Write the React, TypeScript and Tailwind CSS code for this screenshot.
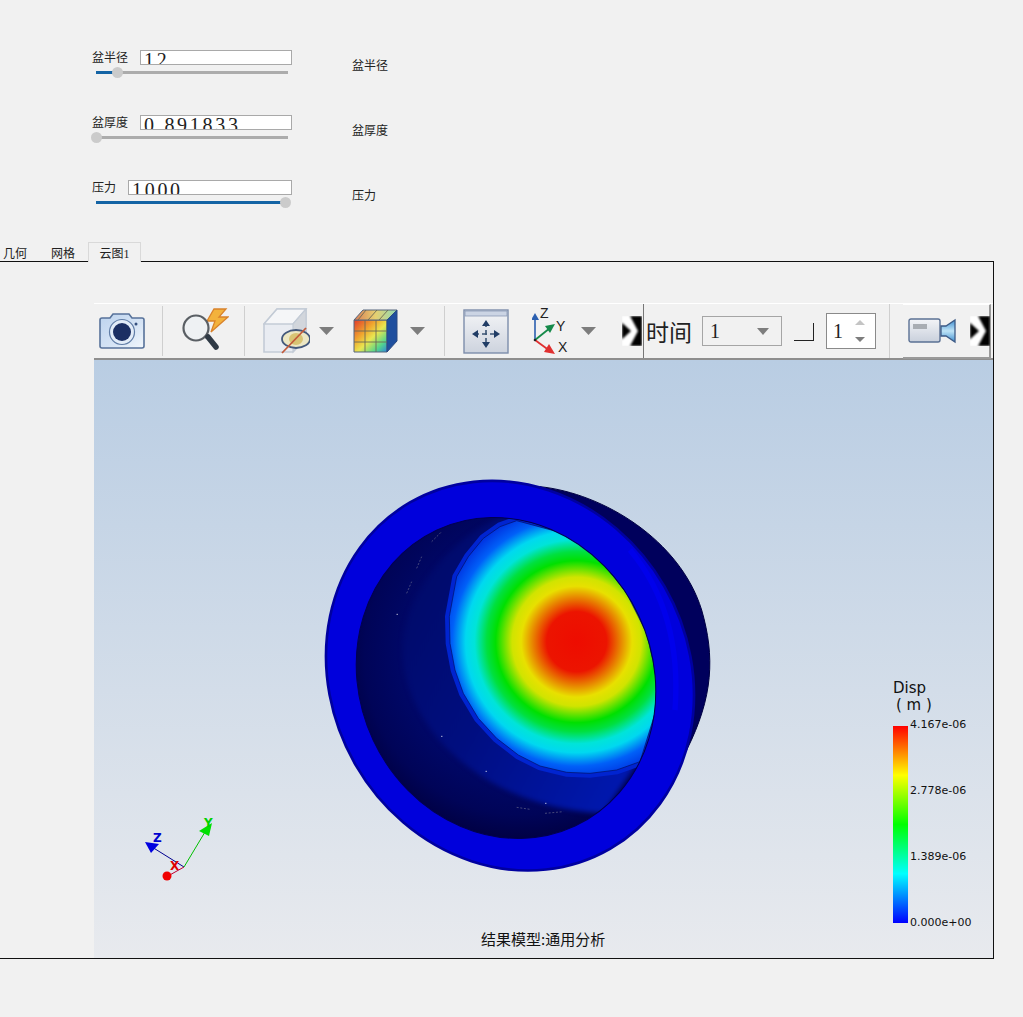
const cjk = "font-['Noto_Sans_CJK_SC','Liberation_Sans',sans-serif]";

const FormRow = ({
  label,
  value,
  inputWidth,
  percent,
}: {
  label: string;
  value: string;
  inputWidth: string;
  percent: number;
}) => (
  <div className="flex h-[65px] items-start">
    <div className="w-[260px] flex-none">
      <div className="flex w-[200px] items-start justify-between">
        <span className="mt-[-2px] text-[12px] leading-[17px] text-[#222]">{label}</span>
        <div
          className={`${inputWidth} h-[15px] overflow-hidden border border-[#a9a9a9] bg-white pl-[3px] font-['Liberation_Serif',serif] text-[20px] leading-[19px] tracking-[2.7px] text-[#222]`}
        >
          {value}
        </div>
      </div>
      <div className="relative ml-[4px] mt-[6px] h-[3px] w-[192px] bg-[#acacac]">
        <div className="h-full bg-[#1464a5]" style={{ width: `${percent}%` }} />
        <div
          className="absolute top-[-4px] ml-[-5px] h-[11px] w-[11px] rounded-full bg-[#cbcbcb]"
          style={{ left: `${percent}%` }}
        />
      </div>
    </div>
    <span className="mt-[6px] text-[12px] leading-[17px] text-[#222]">{label}</span>
  </div>
);

const Separator = ({ className }: { className: string }) => (
  <div className={`h-[50px] w-[1px] flex-none bg-[#cfcfcf] ${className}`} />
);

const DropArrow = ({ className }: { className: string }) => (
  <svg width="15" height="8" viewBox="0 0 15 8" className={`flex-none ${className}`}>
    <path d="M0 0H15L7.5 8Z" fill="#7d7d7d" />
  </svg>
);

const MoreChevron = ({ className }: { className: string }) => (
  <div className={`h-[30px] w-[20px] flex-none overflow-hidden ${className}`}>
    <svg width="20" height="30" viewBox="0 0 20 30" className="blur-[1px]">
      <rect width="20" height="30" fill="#fff" />
      <path d="M-2 5 9 15 -2 25Z" fill="#000" />
      <path d="M7 -2H22V32H7L16 15Z" fill="#000" />
    </svg>
  </div>
);

const CameraIcon = () => (
  <svg width="46" height="38" viewBox="0 0 46 38" className="ml-[5px] flex-none">
    <defs>
      <linearGradient id="camBody" x1="0" y1="0" x2="1" y2="1">
        <stop offset="0" stopColor="#bcd3ee" />
        <stop offset="0.6" stopColor="#d6e4f5" />
        <stop offset="1" stopColor="#f2f7fc" />
      </linearGradient>
    </defs>
    <path
      d="M3 6H11L14 2H30L33 6H43Q45 6 45 8V34Q45 36 43 36H3Q1 36 1 34V8Q1 6 3 6Z"
      fill="url(#camBody)"
      stroke="#57729a"
      strokeWidth="1.6"
    />
    <circle cx="23" cy="20" r="12.5" fill="#e2ecf8" stroke="#5f7ca6" strokeWidth="1.2" />
    <circle cx="23" cy="20" r="9" fill="#1b2f63" />
    <circle cx="37" cy="12" r="1.5" fill="#35507f" />
  </svg>
);

const SearchBoltIcon = () => (
  <svg width="48" height="46" viewBox="0 0 48 46" className="ml-[18px] flex-none">
    <path d="M33 1H45L38 9H47L30 24L34 13H26Z" fill="#f3b23c" stroke="#d9822b" strokeWidth="1.3" />
    <circle cx="15" cy="20" r="12.5" fill="#eef1f3" stroke="#5a5f64" strokeWidth="2.2" />
    <path d="M24 30 27 27" stroke="#5a6068" strokeWidth="3" />
    <path d="M27 29 L35 39" stroke="#2f3a45" strokeWidth="5.5" strokeLinecap="round" />
  </svg>
);

const HiddenCubeIcon = () => (
  <svg width="47" height="46" viewBox="0 0 47 46" className="ml-[18px] flex-none">
    <path d="M1 16 14 1H43V30L30 44H1Z" fill="#e9ecf2" stroke="#c3cbd6" strokeWidth="1.6" />
    <path d="M1 16H30L43 1H14Z" fill="#f5f6f8" stroke="#c3cbd6" strokeWidth="1.4" />
    <path d="M30 16 43 1V30L30 44Z" fill="#d2d6dc" stroke="#c3cbd6" strokeWidth="1.2" />
    <ellipse cx="33" cy="31" rx="14" ry="9" fill="#ece7c4" stroke="#44597c" strokeWidth="1.8" />
    <ellipse cx="33" cy="31" rx="7" ry="6" fill="#d8c474" />
    <path d="M19 45 43 20" stroke="#c25a3a" strokeWidth="1.8" />
  </svg>
);

const ColorCubeIcon = () => (
  <svg width="45" height="45" viewBox="0 0 45 45" className="ml-[19px] flex-none">
    <defs>
      <linearGradient id="cubeFront" x1="0" y1="0" x2="1" y2="1">
        <stop offset="0" stopColor="#e0392c" />
        <stop offset="0.35" stopColor="#f0a92f" />
        <stop offset="0.55" stopColor="#e9e650" />
        <stop offset="0.8" stopColor="#55d68a" />
        <stop offset="1" stopColor="#2e86dd" />
      </linearGradient>
      <linearGradient id="cubeTop" x1="0" y1="0" x2="1" y2="0">
        <stop offset="0" stopColor="#d97a54" />
        <stop offset="0.5" stopColor="#e6d070" />
        <stop offset="1" stopColor="#8ed9b5" />
      </linearGradient>
    </defs>
    <path d="M1 11H34V43H1Z" fill="url(#cubeFront)" stroke="#54657c" strokeWidth="1" />
    <path d="M1 11 10 1H44L34 11Z" fill="url(#cubeTop)" stroke="#54657c" strokeWidth="1" />
    <path d="M34 11 44 1V32L34 43Z" fill="#1f4f9e" stroke="#2c4b80" strokeWidth="1" />
    <path d="M12 11V43M23 11V43M1 22H34M1 33H34M13 1 5 11M24 1 15 11M35 1 26 11" stroke="#6b6a55" strokeWidth="0.9" fill="none" />
  </svg>
);

const FitIcon = () => (
  <svg width="46" height="45" viewBox="0 0 46 45" className="ml-[18px] flex-none">
    <defs>
      <linearGradient id="fitBody" x1="0" y1="0" x2="0" y2="1">
        <stop offset="0" stopColor="#f4f5f7" />
        <stop offset="1" stopColor="#cdd3de" />
      </linearGradient>
    </defs>
    <rect x="1" y="1" width="44" height="43" fill="url(#fitBody)" stroke="#7d8dab" strokeWidth="1.4" />
    <rect x="2" y="2" width="42" height="5" fill="#cbd4e4" stroke="#8a99b5" strokeWidth="0.8" />
    <path d="M23 13V37M11 25H35" stroke="#3b5474" strokeWidth="1.6" strokeDasharray="5 3" />
    <path d="M23 11 19 17H27ZM23 39 19 33H27ZM9 25 15 21V29ZM37 25 31 21V29Z" fill="#213d66" />
  </svg>
);

const AxesIcon = () => (
  <svg width="38" height="47" viewBox="0 0 38 47" className="ml-[23px] flex-none">
    <path d="M3 32V9" stroke="#2b5fb0" strokeWidth="1.6" />
    <path d="M3 5 -1 12H7Z" fill="#2b5fb0" />
    <path d="M3 32 18 20" stroke="#168a4a" strokeWidth="1.8" />
    <path d="M23 16 13 18 18 25Z" fill="#168a4a" />
    <path d="M3 32 18 43" stroke="#e03030" strokeWidth="1.8" />
    <path d="M23 46 12 44 17 36Z" fill="#e03030" />
    <circle cx="3" cy="32" r="1.3" fill="#222" />
    <text x="8" y="10" fontSize="14" fill="#222" fontFamily="'Liberation Sans', sans-serif">Z</text>
    <text x="24" y="23" fontSize="14" fill="#222" fontFamily="'Liberation Sans', sans-serif">Y</text>
    <text x="26" y="44" fontSize="14" fill="#222" fontFamily="'Liberation Sans', sans-serif">X</text>
  </svg>
);

const VideoIcon = () => (
  <svg width="48" height="26" viewBox="0 0 48 26" className="ml-[5px] flex-none">
    <defs>
      <linearGradient id="vidBody" x1="0" y1="0" x2="0" y2="1">
        <stop offset="0" stopColor="#f3f4f7" />
        <stop offset="1" stopColor="#c9d0dc" />
      </linearGradient>
      <linearGradient id="vidLens" x1="0" y1="0" x2="0" y2="1">
        <stop offset="0" stopColor="#3f8fd0" />
        <stop offset="0.5" stopColor="#bfe4f7" />
        <stop offset="1" stopColor="#3f8fd0" />
      </linearGradient>
    </defs>
    <rect x="1" y="1" width="31" height="23" rx="2" fill="url(#vidBody)" stroke="#5b7194" strokeWidth="1.4" />
    <rect x="5" y="6" width="14" height="5" fill="#a9adb3" />
    <path d="M33 8H38L47 2V24L38 18H33Z" fill="url(#vidLens)" stroke="#3d5a86" strokeWidth="1.3" />
  </svg>
);

const Toolbar = () => (
  <div className="flex h-[57px] flex-none items-center border-b-2 border-t border-b-[#8e8e8e] border-t-white bg-[#f1f1f1]">
    <CameraIcon />
    <Separator className="ml-[17px]" />
    <SearchBoltIcon />
    <Separator className="ml-[15px]" />
    <HiddenCubeIcon />
    <DropArrow className="ml-[9px]" />
    <ColorCubeIcon />
    <DropArrow className="ml-[12px]" />
    <Separator className="ml-[19px]" />
    <FitIcon />
    <AxesIcon />
    <DropArrow className="ml-[11px]" />
    <MoreChevron className="ml-[26px]" />
    <div className="ml-[1px] h-full w-[1px] flex-none bg-[#777]" />
    <span className={`ml-[2px] text-[23px] leading-none text-[#222] ${cjk}`}>时间</span>
    <div className="ml-[10px] flex h-[30px] w-[80px] flex-none items-center justify-between border border-[#a5a5a5] pl-[7px] pr-[12px] font-['Liberation_Serif',serif] text-[20px] text-[#222]">
      1
      <svg width="12" height="7" viewBox="0 0 12 7">
        <path d="M0 0H12L6 7Z" fill="#7d7d7d" />
      </svg>
    </div>
    <div className="ml-[12px] mt-[2px] h-[18px] w-[20px] flex-none border-b border-r border-[#222]" />
    <div className="ml-[12px] flex h-[36px] w-[50px] flex-none items-center justify-between border border-[#8a8a8a] bg-white pl-[6px] pr-[9px] font-['Liberation_Serif',serif] text-[20px] text-[#222]">
      1
      <svg width="12" height="26" viewBox="0 0 12 26">
        <path d="M1 7 6 2 11 7Z" fill="#c4c4c4" />
        <path d="M1 19H11L6 24Z" fill="#7d7d7d" />
      </svg>
    </div>
    <Separator className="ml-[13px] !h-full" />
    <div className="ml-[13px] flex h-[55px] w-[88px] flex-none items-center border-b-2 border-r-2 border-t border-b-[#9a9a9a] border-r-[#9a9a9a] border-t-white bg-[#f1f1f1]">
      <VideoIcon />
      <MoreChevron className="ml-[14px]" />
    </div>
  </div>
);

const heatOutline =
  "M620 152L760 190L860 255L950 370L1010 490L1040 620L1035 730L990 875L920 900L840 910L770 907L690 888L625 855L560 805L505 745L460 670L435 600L420 520L418 440L440 320L475 260L520 205L570 170Z";

// coordinates are in a 3x space: 420x410 px on screen
const ResultModel = () => (
  <svg width="420" height="410" viewBox="0 0 1260 1230" className="absolute left-[216px] top-[110px]">
    <defs>
      <radialGradient id="heat" gradientUnits="userSpaceOnUse" cx="800" cy="515" r="450">
        <stop offset="0" stopColor="#ee0c00" />
        <stop offset="0.2" stopColor="#ec1400" />
        <stop offset="0.29" stopColor="#e88000" />
        <stop offset="0.37" stopColor="#e8e000" />
        <stop offset="0.43" stopColor="#d0e400" />
        <stop offset="0.54" stopColor="#00e000" />
        <stop offset="0.6" stopColor="#00e040" />
        <stop offset="0.68" stopColor="#00e4d8" />
        <stop offset="0.74" stopColor="#00d8f0" />
        <stop offset="0.83" stopColor="#0060f8" />
        <stop offset="0.93" stopColor="#0030e0" />
        <stop offset="1" stopColor="#0018b8" />
      </radialGradient>
      <linearGradient id="dome" x1="0" y1="0" x2="1" y2="0.6">
        <stop offset="0.1" stopColor="#000a68" />
        <stop offset="0.5" stopColor="#000e80" />
        <stop offset="1" stopColor="#0018b0" />
      </linearGradient>
      <radialGradient id="crescent" gradientUnits="userSpaceOnUse" cx="640" cy="560" r="560">
        <stop offset="0.6" stopColor="#00086a" />
        <stop offset="0.85" stopColor="#000458" />
        <stop offset="1" stopColor="#000040" />
      </radialGradient>
      <clipPath id="opening">
        <ellipse cx="588" cy="624" rx="440" ry="490" transform="rotate(-25 588 624)" />
      </clipPath>
      <clipPath id="frontRing">
        <ellipse cx="600" cy="617" rx="535" ry="600" transform="rotate(-30 600 617)" />
      </clipPath>
    </defs>
    <path d="M690 50C880 70 1110 210 1175 420C1215 560 1210 680 1130 840L800 700Z" fill="#00005c" stroke="#000040" strokeWidth="3" />
    <ellipse cx="600" cy="617" rx="535" ry="600" transform="rotate(-30 600 617)" fill="#0000dc" stroke="#0000a0" strokeWidth="8" />
    <g clipPath="url(#frontRing)">
      <path d="M960 240C1060 360 1110 520 1095 720" fill="none" stroke="#0000ec" strokeWidth="16" />
    </g>
    <g clipPath="url(#opening)">
      <rect width="1260" height="1230" fill="url(#crescent)" />
      <path d="M600 130C420 200 270 380 280 560C290 760 500 1010 880 1030L1100 700L900 200Z" fill="url(#dome)" className="blur-[8px]" />
      <path d={heatOutline} fill="none" stroke="#0024d0" strokeWidth="26" />
      <path d={heatOutline} fill="url(#heat)" stroke="#001060" strokeWidth="2" />
    </g>
    <ellipse cx="588" cy="624" rx="440" ry="490" transform="rotate(-25 588 624)" fill="none" stroke="#000050" strokeWidth="3" />
    <path d="M394 799h3M527 904h3M706 1000h3M260 433h3" stroke="#fff" strokeWidth="3" />
    <path d="M290 370 305 335M320 295 335 260M365 215 395 185M620 1012 660 1018M705 1030 760 1025" stroke="#8a8a9a" strokeWidth="1.5" strokeDasharray="6 5" />
  </svg>
);

const AxisTriad = () => (
  <svg width="100" height="80" viewBox="0 0 100 80" className="absolute left-[36px] top-[450px]">
    <path d="M54 57 22 37" stroke="#000090" strokeWidth="1" />
    <path d="M15 32 29 34 21 43Z" fill="#0000e0" />
    <path d="M54 57 75 22" stroke="#00c000" strokeWidth="1" />
    <path d="M82 13 69 21 79 26Z" fill="#00e000" />
    <path d="M54 57 38 66" stroke="#c00030" strokeWidth="1" />
    <circle cx="37" cy="66" r="4.5" fill="#f00000" />
    <text x="23" y="32" fontSize="12" fontWeight="700" fill="#0000d0" fontFamily="'DejaVu Sans', sans-serif">Z</text>
    <text x="74" y="17" fontSize="12" fontWeight="700" fill="#00d000" fontFamily="'DejaVu Sans', sans-serif">Y</text>
    <text x="40" y="60" fontSize="12" fontWeight="700" fill="#e00000" fontFamily="'DejaVu Sans', sans-serif">X</text>
  </svg>
);

const Legend = () => (
  <div className="absolute left-[799px] top-[320px] font-['DejaVu_Sans',sans-serif] text-[#111]">
    <div className="text-[15px] leading-[17px]">Disp</div>
    <div className="ml-[3px] whitespace-pre text-[15px] font-medium leading-[17px]">( m )</div>
    <div className="mt-[12px] flex h-[197px]">
      <div className="h-full w-[15px] bg-[linear-gradient(to_bottom,#ff0000,#ffff00_25%,#00ff00_50%,#00ffff_75%,#0000ff)]" />
      <div className="ml-[2px] mt-[-9px] flex h-[214px] flex-col justify-between text-[11px] leading-[16px]">
        <span>4.167e-06</span>
        <span>2.778e-06</span>
        <span>1.389e-06</span>
        <span>0.000e+00</span>
      </div>
    </div>
  </div>
);

export default function App() {
  return (
    <div className={`flex h-[1017px] w-[1023px] flex-col overflow-hidden bg-[#f1f1f1] ${cjk}`}>
      <div className="h-[242px] flex-none pl-[92px] pt-[50px]">
        <FormRow label="盆半径" value="12" inputWidth="w-[152px]" percent={11} />
        <FormRow label="盆厚度" value="0.891833" inputWidth="w-[152px]" percent={0} />
        <FormRow label="压力" value="1000" inputWidth="w-[164px]" percent={98.5} />
      </div>

      <div className="z-10 mb-[-1px] flex h-[20px] flex-none items-end text-[12px] leading-[19px] text-[#222]">
        <div className="ml-[3px] h-[19px]">几何</div>
        <div className="ml-[24px] h-[19px]">网格</div>
        <div className="ml-[13px] h-[20px] w-[53px] border-x border-t border-[#d9d9d9] bg-[#f1f1f1] text-center">
          云图<span className="font-['Liberation_Serif',serif]">1</span>
        </div>
      </div>

      <div className="flex h-[698px] w-[994px] flex-none flex-col border-y border-r border-[#111] pl-[94px] pt-[41px]">
        <Toolbar />
        <div className="relative flex-1 bg-[linear-gradient(to_bottom,#b9cde3,#e8eaee)]">
          <ResultModel />
          <AxisTriad />
          <Legend />
          <div className="absolute bottom-[9px] left-[387px] text-[15px] leading-[20px] text-[#111]">
            结果模型:通用分析
          </div>
        </div>
      </div>
    </div>
  );
}
